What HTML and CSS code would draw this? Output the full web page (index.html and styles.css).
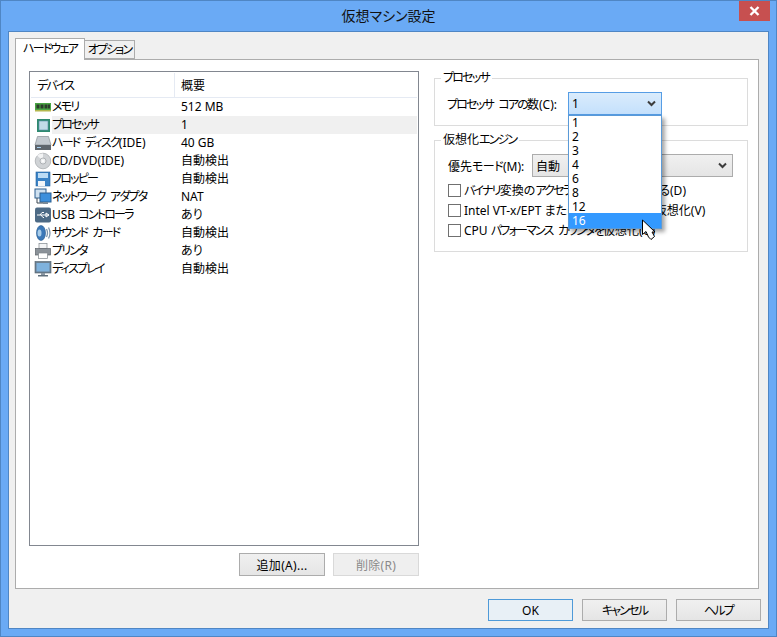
FILE: index.html
```html
<!DOCTYPE html>
<html lang="ja">
<head>
<meta charset="utf-8">
<title>仮想マシン設定</title>
<link rel="stylesheet" href="styles.css">
</head>
<body>
<div class="window">
  <header class="titlebar">
    <span></span>
    <span class="title">仮想マシン設定</span>
    <span class="close"><svg width="11" height="10" viewBox="0 0 11 10"><path d="M1.500 1 L9.500 9 M9.500 1 L1.500 9" stroke="#fff" stroke-width="2.400" fill="none"/></svg></span>
  </header>
  <div class="client">
    <div class="tabs">
      <div class="tab active k">ハードウェア</div>
      <div class="tab k">オプション</div>
    </div>
    <div class="panel">
      <div class="left">
        <div class="list">
          <div class="list-head"><div class="h1 k">デバイス</div><div class="h2">概要</div></div>
          <div class="row"><span class="ico"><svg width="18" height="18" viewBox="0 0 18 18"><rect x="1" y="5" width="16" height="7" fill="#4aa544"/><rect x="1" y="12" width="16" height="1.500" fill="#b4b84e"/><rect x="2.500" y="6.500" width="3" height="4" fill="#2b3b2b"/><rect x="6.500" y="6.500" width="3" height="4" fill="#2b3b2b"/><rect x="10.500" y="6.500" width="3" height="4" fill="#2b3b2b"/><rect x="14" y="6.500" width="2" height="4" fill="#2b3b2b"/></svg></span><span class="n"><span class="k">メモリ</span></span><span class="v">512 MB</span></div>
          <div class="row sel"><span class="ico"><svg width="18" height="18" viewBox="0 0 18 18"><rect x="3" y="3" width="13" height="13" fill="#2f8a70"/><rect x="5" y="5" width="9" height="9" fill="#c2dbe8" stroke="#5d8fa8" stroke-width=".6"/></svg></span><span class="n"><span class="k">プロセッサ</span></span><span class="v">1</span></div>
          <div class="row"><span class="ico"><svg width="18" height="18" viewBox="0 0 18 18"><path d="M3.500 2.500 H14.500 L17 11 H1 Z" fill="#c4cad0" stroke="#8a9096" stroke-width=".7"/><rect x="1" y="11" width="16" height="5" fill="#5f666d"/><rect x="3" y="13" width="4" height="1" fill="#a9d0ef"/></svg></span><span class="n"><span class="k">ハード ディスク</span>(IDE)</span><span class="v">40 GB</span></div>
          <div class="row"><span class="ico"><svg width="18" height="18" viewBox="0 0 18 18"><circle cx="9" cy="9" r="7.800" fill="#d0d3d6" stroke="#a3a7ab" stroke-width=".7"/><path d="M9 9 L3 3.500 A8 8 0 0 1 9 1.400Z" fill="#f2f3f4"/><circle cx="9" cy="9" r="3" fill="#eef0f1" stroke="#9a9ea2" stroke-width=".7"/><circle cx="9" cy="9" r="1" fill="#fff"/></svg></span><span class="n">CD/DVD(IDE)</span><span class="v">自動検出</span></div>
          <div class="row"><span class="ico"><svg width="18" height="18" viewBox="0 0 18 18"><rect x="2" y="2" width="14" height="14" fill="#3b83c6" stroke="#22609c" stroke-width=".6"/><rect x="4" y="3" width="10" height="5" fill="#bcdcf5"/><rect x="4" y="11" width="7" height="5" fill="#f2f5f8"/></svg></span><span class="n"><span class="k">フロッピー</span></span><span class="v">自動検出</span></div>
          <div class="row"><span class="ico"><svg width="18" height="18" viewBox="0 0 18 18"><rect x="1" y="1" width="11" height="9" fill="#cfe1f0" stroke="#2c5f8f"/><rect x="6" y="5" width="11" height="9" fill="#3c8fdc" stroke="#2c5f8f"/><rect x="9" y="14" width="5" height="2" fill="#7a8a98"/><path d="M3 10 V15 H9" stroke="#3a4650" fill="none"/></svg></span><span class="n"><span class="k">ネットワーク アダプタ</span></span><span class="v">NAT</span></div>
          <div class="row"><span class="ico"><svg width="18" height="18" viewBox="0 0 18 18"><rect x="1" y="1.500" width="16" height="15" rx="2" fill="#4d6a85"/><path d="M3 9 H15 M12 7 L15 9 L12 11 Z M6 9 L8 6.500 H10 M7 9 L9 11.500 H10" stroke="#fff" stroke-width="1" fill="none"/></svg></span><span class="n">USB <span class="k">コントローラ</span></span><span class="v">あり</span></div>
          <div class="row"><span class="ico"><svg width="18" height="18" viewBox="0 0 18 18"><ellipse cx="7" cy="9" rx="4.500" ry="7.500" fill="#3b78b8" stroke="#24568a" stroke-width=".6"/><ellipse cx="5.500" cy="9" rx="2" ry="3.500" fill="#a9cdea"/><path d="M12.500 5 Q14.500 9 12.500 13 M14.500 3.500 Q17.500 9 14.500 14.500" stroke="#7f97ae" stroke-width="1.300" fill="none"/></svg></span><span class="n"><span class="k">サウンド カード</span></span><span class="v">自動検出</span></div>
          <div class="row"><span class="ico"><svg width="18" height="18" viewBox="0 0 18 18"><rect x="5" y="1.500" width="8" height="5" fill="#f4f5f6" stroke="#7f868c" stroke-width=".7"/><rect x="1.500" y="6.500" width="15" height="6.500" fill="#8b9299" stroke="#5c6268" stroke-width=".7"/><rect x="4.500" y="11" width="9" height="5.500" fill="#fff" stroke="#7f868c" stroke-width=".7"/></svg></span><span class="n"><span class="k">プリンタ</span></span><span class="v">あり</span></div>
          <div class="row"><span class="ico"><svg width="18" height="18" viewBox="0 0 18 18"><rect x="1" y="1.500" width="16" height="11.500" fill="#6c7f90" stroke="#4f5f6c" stroke-width=".6"/><rect x="2.500" y="3" width="13" height="8.500" fill="#7fb2dd"/><rect x="7" y="13" width="4" height="2" fill="#8a97a3"/><rect x="4" y="15" width="10" height="1.500" fill="#5f6e7b"/></svg></span><span class="n"><span class="k">ディスプレイ</span></span><span class="v">自動検出</span></div>
        </div>
        <div class="list-actions">
          <button class="btn add">追加(A)...</button>
          <button class="btn del" disabled>削除(R)</button>
        </div>
      </div>
      <div class="right">
        <fieldset class="group g1">
          <legend class="k">プロセッサ</legend>
          <div class="core-row">
            <span class="lbl"><span class="k">プロセッサ コアの</span>数(C):</span>
            <div class="combo-wrap">
              <div class="combo open"><span>1</span><svg class="chev" width="9" height="7" viewBox="0 0 9 7"><path d="M1 1.500 L4.500 5 L8 1.500" stroke="#3c3c3c" stroke-width="2" fill="none"/></svg></div>
              <ul class="dropdown">
                <li>1</li><li>2</li><li>3</li><li>4</li><li>6</li><li>8</li><li>12</li><li class="hot">16</li>
              </ul>
              <svg class="cursor" width="15" height="22" viewBox="0 0 15 22"><path d="M1.500 1 V15.500 L5 12.500 L7.500 18 L10 20.500 L13.500 17.500 L11 13 H14 Z" fill="#fff" stroke="#000" stroke-width="1" stroke-linejoin="round"/></svg>
            </div>
          </div>
        </fieldset>
        <fieldset class="group g2">
          <legend>仮想化<span class="k">エンジン</span></legend>
          <div class="mode-row">
            <span class="lbl">優先<span class="k2">モード</span>(M):</span>
            <div class="combo plain"><span>自動</span><svg class="chev" width="9" height="7" viewBox="0 0 9 7"><path d="M1 1.500 L4.500 5 L8 1.500" stroke="#3c3c3c" stroke-width="2" fill="none"/></svg></div>
          </div>
          <label class="chk"><span class="box"></span><span><span class="k">バイナリ</span>変換の<span class="k">アクセラレーションを</span>使用する(D)</span></label>
          <label class="chk"><span class="box"></span><span>Intel VT-x/EPT またはAMD-V/RVI を仮想化(V)</span></label>
          <label class="chk"><span class="box"></span><span>CPU <span class="k">パフォーマンス カウンタを</span>仮想化(U)</span></label>
        </fieldset>
      </div>
    </div>
    <footer class="footer">
      <button class="btn def">OK</button>
      <button class="btn"><span class="k">キャンセル</span></button>
      <button class="btn"><span class="k">ヘルプ</span></button>
    </footer>
  </div>
</div>
</body>
</html>
```
FILE: styles.css
```css
* { box-sizing: border-box; }
html, body { margin: 0; padding: 0; }
body {
  width: 777px; height: 637px; overflow: hidden;
  font-family: "Noto Sans", "Noto Sans CJK JP", sans-serif;
  font-size: 12px; color: #000;
  font-feature-settings: "palt" 1;
}
.k { letter-spacing: -1.8px; word-spacing: 4px; }
.k2 { letter-spacing: -.6px; }
.window {
  width: 777px; height: 637px;
  display: flex; flex-direction: column;
  background: #6aaaf5;
  border: 1px solid #4f86c4;
}
.titlebar {
  height: 30px; flex: none;
  display: grid; grid-template-columns: 1fr auto 1fr;
}
.title { font-size: 14px; line-height: 30px; color: #111; }
.close {
  justify-self: end; margin-right: 6px;
  width: 31px; height: 20px;
  background: #c75050;
  display: flex; align-items: center; justify-content: center;
}
.client {
  flex: 1; margin: 0 7px 7px;
  background: #f0f0f0;
  border: 1px solid #4f86c4;
  display: flex; flex-direction: column;
  padding: 0 7px 0 6px;
}
.tabs { display: flex; align-items: flex-end; height: 27px; flex: none; }
.tab {
  height: 19px; line-height: 18px;
  border: 1px solid #acacac; border-left: 0;
  background: #f0f0f0;
  width: 50px; text-align: center; white-space: nowrap;
}
.tab.active {
  height: 22px; line-height: 20px; width: 70px;
  background: #fff; border: 1px solid #acacac; border-bottom: 0;
  margin-bottom: -1px; position: relative; z-index: 1;
}
.panel {
  height: 530px; flex: none; margin-right: 2px;
  background: #fff; border: 1px solid #acacac;
  display: flex; padding: 11px 11px 0 13px; gap: 15px;
}
.left { width: 390px; flex: none; }
.list { height: 475px; border: 1px solid #828790; padding: 1px; background: #fff; }
.list-head {
  display: flex; height: 25px; line-height: 25px;
  border-bottom: 1px solid #e5eaf3;
}
.h1 { width: 144px; padding-left: 6px; border-right: 1px solid #e5eaf3; }
.h2 { padding-left: 6px; }
.row { display: flex; height: 18px; line-height: 18px; white-space: nowrap; }
.ico { width: 18px; margin-left: 3px; flex: none; display: flex; align-items: center; }
.n { width: 129px; flex: none; }
.v { flex: 1; }
.row.sel .n, .row.sel .v { background: #f0f0f0; }
.list-actions { display: flex; justify-content: flex-end; gap: 8px; margin-top: 7px; }
.btn {
  font: inherit; color: #000;
  font-feature-settings: inherit;
  height: 23px; padding: 0;
  background: linear-gradient(#f0f0f0, #e5e5e5);
  border: 1px solid #acacac;
  width: 86px;
}
.btn.add, .btn.del { letter-spacing: .3px; }
.btn.del { background: #efefef; border-color: #d9d9d9; color: #8a8a8a; }
.right { width: 314px; flex: none; }
.group {
  margin: 0; border: 1px solid #dcdcdc; min-width: 0;
  padding: 0 12px;
}
.group legend { padding: 0 3px 0 2px; margin-left: -6px; line-height: 14px; }
.g1 { height: 55px; }
.g2 { height: 119px; margin-top: 7px; }
.lbl { white-space: nowrap; }
.core-row { display: flex; align-items: center; margin-top: 7px; }
.core-row .lbl { width: 121px; }
.combo-wrap { position: relative; width: 94px; }
.combo {
  height: 23px; display: flex; align-items: center; justify-content: space-between;
  padding: 0 4px 0 3px;
  border: 1px solid #acacac; background: linear-gradient(#f0f0f0, #e5e5e5);
}
.combo.open { border-color: #569de5; background: linear-gradient(#daecfc, #c4e0fc); }
.chev { flex: none; margin-right: 1px; }
.dropdown {
  position: absolute; left: 0; top: 23px; width: 94px; height: 114px;
  margin: 0; padding: 0;
  list-style: none; background: #fff; border: 1px solid #5a9ad8; z-index: 5;
  box-shadow: 3px 3px 4px rgba(0,0,0,.35);
}
.dropdown li { height: 14px; line-height: 14px; padding-left: 3px; }
.dropdown li.hot { background: #3399ff; color: #fff; height: 15px; margin-top: -1px; line-height: 15px; }
.cursor { position: absolute; left: 73px; top: 127px; z-index: 6; }
.mode-row { display: flex; align-items: center; height: 23px; margin-top: 7px; padding-left: 1px; }
.mode-row .lbl { width: 84px; }
.combo.plain { width: 201px; }
.chk { display: flex; align-items: center; height: 20px; white-space: nowrap; margin-left: 1px; }
.mode-row + .chk { margin-top: 3px; }
.box {
  width: 13px; height: 13px; flex: none; margin-right: 3px;
  border: 1px solid #707070; background: #fff;
}
.footer {
  flex: 1; display: flex; justify-content: flex-end; gap: 9px;
  padding: 10px 0 0;
}
.footer .btn { width: 85px; height: 22px; }
.btn.def { border-color: #4f9ad8; background: #e8f0f6; }
```
